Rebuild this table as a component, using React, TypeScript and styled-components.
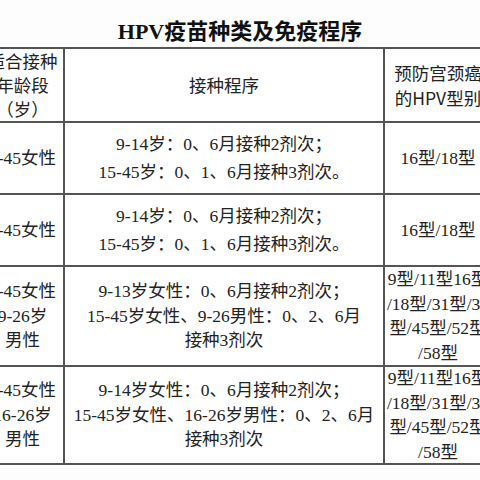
import * as React from "react";
import styled, { createGlobalStyle } from "styled-components";

const GlobalStyle = createGlobalStyle`
  html, body {
    margin: 0;
    padding: 0;
    background: #ffffff;
    width: 480px;
    height: 480px;
    overflow: hidden;
  }
`;

const Page = styled.div`
  width: 480px;
  height: 480px;
  overflow: hidden;
  background: #fdfdfd;
  color: #222;
`;

const Title = styled.h1`
  margin: 0;
  height: 47px;
  padding-top: 17px;
  box-sizing: border-box;
  font-family: "Liberation Serif", "Noto Sans CJK SC", serif;
  font-size: 22px;
  font-weight: 700;
  line-height: 30px;
  text-align: center;
  color: #111;
`;

const Table = styled.div`
  display: grid;
  grid-template-columns: 81px 318px 106px;
  grid-template-rows: 72px 70px 70px 98px 96px;
  gap: 2px;
  width: max-content;
  margin-left: -20px;
  border: 2px solid #555;
  background: #555;
`;

const Cell = styled.div<{ $head?: boolean; $dense?: boolean }>`
  background: #fff;
  display: flex;
  flex-direction: column;
  align-items: center;
  justify-content: center;
  text-align: center;
  white-space: nowrap;
  font-family: ${(p) =>
    p.$head
      ? `"Noto Sans CJK SC", "Liberation Sans", sans-serif`
      : `"Liberation Serif", "Noto Sans CJK SC", serif`};
  font-size: 17.5px;
  line-height: ${(p) => (p.$head ? "24px" : p.$dense ? "24.5px" : "28px")};
  color: #222;
`;

type Row = { age: string[]; plan: string[]; types: string[] };

const rows: Row[] = [
  {
    age: ["9-45女性"],
    plan: ["9-14岁：0、6月接种2剂次；", "15-45岁：0、1、6月接种3剂次。"],
    types: ["16型/18型"],
  },
  {
    age: ["9-45女性"],
    plan: ["9-14岁：0、6月接种2剂次；", "15-45岁：0、1、6月接种3剂次。"],
    types: ["16型/18型"],
  },
  {
    age: ["9-45女性", "9-26岁", "男性"],
    plan: ["9-13岁女性：0、6月接种2剂次；", "15-45岁女性、9-26男性：0、2、6月", "接种3剂次"],
    types: ["9型/11型16型", "/18型/31型/33", "型/45型/52型", "/58型"],
  },
  {
    age: ["9-45女性", "16-26岁", "男性"],
    plan: ["9-14岁女性：0、6月接种2剂次；", "15-45岁女性、16-26岁男性：0、2、6月", "接种3剂次"],
    types: ["9型/11型16型", "/18型/31型/33", "型/45型/52型", "/58型"],
  },
];

const Lines: React.FC<{ lines: string[] }> = ({ lines }) => (
  <>
    {lines.map((l, i) => (
      <span key={i}>{l}</span>
    ))}
  </>
);

export default function App() {
  return (
    <Page>
      <GlobalStyle />
      <Title>HPV疫苗种类及免疫程序</Title>
      <Table>
        <Cell $head>
          <Lines lines={["适合接种", "年龄段", "（岁）"]} />
        </Cell>
        <Cell $head>接种程序</Cell>
        <Cell $head style={{ lineHeight: "25px" }}>
          <Lines lines={["预防宫颈癌", "的HPV型别"]} />
        </Cell>
        {rows.map((r, i) => (
          <React.Fragment key={i}>
            <Cell $dense>
              <Lines lines={r.age} />
            </Cell>
            <Cell $dense={r.plan.length > 2}>
              <Lines lines={r.plan} />
            </Cell>
            <Cell $dense>
              <Lines lines={r.types} />
            </Cell>
          </React.Fragment>
        ))}
      </Table>
    </Page>
  );
}
